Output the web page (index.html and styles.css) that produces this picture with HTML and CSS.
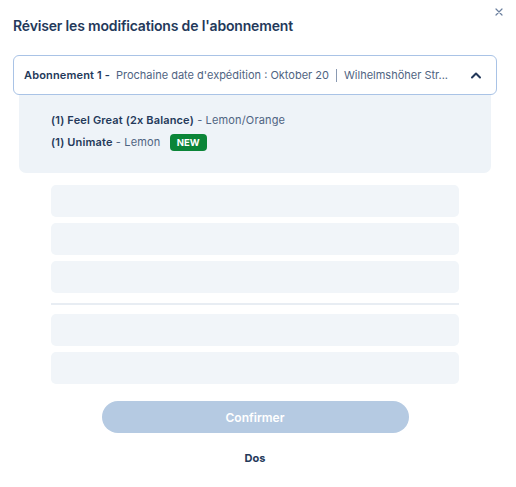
FILE: index.html
```html
<!DOCTYPE html>
<html lang="fr">
<head>
<meta charset="utf-8">
<link rel="stylesheet" href="styles.css">
</head>
<body>
<div class="modal">
  <button class="close" aria-label="Fermer">
    <svg width="8" height="8" viewBox="0 0 8 8"><path d="M1 1L7 7M7 1L1 7" stroke="#6b7f9e" stroke-width="1.2" stroke-linecap="round"/></svg>
  </button>
  <h1 class="title">Réviser les modifications de l'abonnement</h1>
  <div class="accordion">
    <div class="acc-head">
      <span class="acc-name">Abonnement 1 -</span>
      <span class="acc-info">Prochaine date d'expédition : Oktober 20</span>
      <span class="sep"></span>
      <span class="acc-info">Wilhelmshöher Str...</span>
      <svg class="chev" width="12" height="8" viewBox="0 0 12 8"><path d="M2 6.5L6 2.5L10 6.5" fill="none" stroke="#24395a" stroke-width="2" stroke-linecap="round" stroke-linejoin="round"/></svg>
    </div>
  </div>
  <div class="acc-body">
    <div class="item"><b>(1) Feel Great (2x Balance)</b> - Lemon/Orange</div>
    <div class="item"><b>(1) Unimate</b> - Lemon <span class="badge">NEW</span></div>
  </div>
  <div class="skeletons">
    <div class="sk"></div>
    <div class="sk"></div>
    <div class="sk"></div>
    <div class="divider"></div>
    <div class="sk"></div>
    <div class="sk"></div>
  </div>
  <div class="actions">
    <button class="confirm" disabled>Confirmer</button>
    <button class="back">Dos</button>
  </div>
</div>
</body>
</html>
```
FILE: styles.css
```css
* { box-sizing: border-box; }
html, body { margin: 0; padding: 0; background: #fff; }
body { font-family: Inter, "Noto Sans", sans-serif; color: #24395a; }
.modal { position: relative; width: 510px; padding: 13px 13px 0 13px; }
.close { position: absolute; top: 6px; right: 5px; width: 12px; height: 12px; padding: 2px; border: 0; background: none; display: flex; align-items: center; justify-content: center; }
.title { margin: 3px 0 0 0; font-size: 14px; font-weight: 600; line-height: 20px; color: #24395a; letter-spacing: -0.17px; }
.accordion { margin-top: 19px; border: 1px solid #a9c3e6; border-radius: 6px; height: 40px; }
.acc-head { display: flex; align-items: center; height: 38px; padding: 0 14px 0 10px; font-size: 11px; white-space: nowrap; }
.acc-name { font-weight: 600; color: #24395a; margin-right: 6px; letter-spacing: 0.15px; }
.acc-info { color: #4f6482; }
.sep { width: 1px; height: 13px; background: #8a9ab2; margin: 0 7px; }
.chev { margin-left: auto; }
.acc-body { margin: 0 6px; background: #eef3f8; border-radius: 0 0 7px 7px; padding: 14px 32px 20px; font-size: 11px; color: #4f6482; letter-spacing: 0.15px; }
.item { height: 22px; display: flex; align-items: center; white-space: pre; }
.item b { font-weight: 600; color: #24395a; }
.badge { display: inline-block; margin-left: 6px; background: #0b8538; color: #fff; font-size: 9.5px; font-weight: 700; line-height: 17px; height: 17px; padding: 0 7px; border-radius: 4px; letter-spacing: 0; }
.skeletons { display: flex; flex-direction: column; gap: 6px; margin: 12px 38px 0; }
.sk { height: 32px; background: #f1f5f9; border-radius: 5px; }
.divider { height: 2px; background: #e8edf3; margin: 4px 0 3px; }
.actions { display: flex; flex-direction: column; align-items: center; margin-top: 17px; }
.confirm { width: 307px; height: 32px; border: 0; border-radius: 16px; background: #b5cae2; color: #fff; font-family: inherit; font-size: 12px; font-weight: 600; }
.back { margin-top: 18px; border: 0; background: none; font-family: inherit; font-size: 11px; font-weight: 700; color: #24395a; padding: 0; }
```
